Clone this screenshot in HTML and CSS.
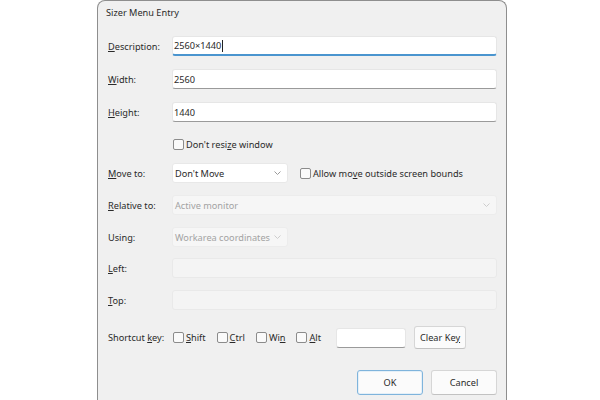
FILE: index.html
```html
<!DOCTYPE html>
<html lang="en">
<head>
    <meta charset="UTF-8">
    <title>Sizer Menu Entry</title>
    <link rel="stylesheet" href="styles.css">
</head>
<body>

<div class="dialog">
    <div class="title">Sizer Menu Entry</div>

    <div class="form">
        <div class="row r-desc">
            <label class="label"><u>D</u>escription:</label>
            <div class="field focused">2560×1440<span class="caret"></span></div>
        </div>
        <div class="row r-text">
            <label class="label"><u>W</u>idth:</label>
            <div class="field">2560</div>
        </div>
        <div class="row r-text">
            <label class="label"><u>H</u>eight:</label>
            <div class="field">1440</div>
        </div>

        <div class="row r-check">
            <span class="label"></span>
            <label class="check"><span class="box"></span>Don't resi<u>z</u>e window</label>
        </div>

        <div class="row r-move">
            <label class="label"><u>M</u>ove to:</label>
            <div class="select short">
                <span>Don't Move</span>
                <svg class="chev" width="7" height="4" viewBox="0 0 7 4"><path d="M0.5 0.5 L3.5 3.5 L6.5 0.5" fill="none" stroke="#9a9a9a" stroke-width="1"/></svg>
            </div>
            <label class="check outside"><span class="box"></span>Allow mo<u>v</u>e outside screen bounds</label>
        </div>

        <div class="row r-sel">
            <label class="label"><u>R</u>elative to:</label>
            <div class="select disabled">
                <span>Active monitor</span>
                <svg class="chev" width="7" height="4" viewBox="0 0 7 4"><path d="M0.5 0.5 L3.5 3.5 L6.5 0.5" fill="none" stroke="#cdcdcd" stroke-width="1"/></svg>
            </div>
        </div>

        <div class="row r-sel">
            <label class="label">Using:</label>
            <div class="select short disabled">
                <span>Workarea coordinates</span>
                <svg class="chev" width="7" height="4" viewBox="0 0 7 4"><path d="M0.5 0.5 L3.5 3.5 L6.5 0.5" fill="none" stroke="#cdcdcd" stroke-width="1"/></svg>
            </div>
        </div>

        <div class="row r-left">
            <label class="label"><u>L</u>eft:</label>
            <div class="field disabled"></div>
        </div>
        <div class="row r-sel">
            <label class="label"><u>T</u>op:</label>
            <div class="field disabled"></div>
        </div>

        <div class="row r-key">
            <label class="label">Shortcut <u>k</u>ey:</label>
            <label class="check mod"><span class="box"></span><u>S</u>hift</label>
            <label class="check mod"><span class="box"></span><u>C</u>trl</label>
            <label class="check mod"><span class="box"></span>Wi<u>n</u></label>
            <label class="check mod"><span class="box"></span><u>A</u>lt</label>
            <div class="field keybox"></div>
            <button class="btn clear">Clear Ke<u>y</u></button>
        </div>

        <div class="row r-buttons">
            <button class="btn ok">OK</button>
            <button class="btn">Cancel</button>
        </div>
    </div>
</div>

</body>
</html>
```

FILE: styles.css
```css
body {
    margin: 0;
    background: #fff;
    font-family: "Noto Sans", "Open Sans", sans-serif;
    font-size: 9.2px;
    color: #2a2a2a;
}
u {
    text-decoration: underline;
    text-underline-offset: 1px;
}
.dialog {
    margin-left: 97px;
    width: 408px;
    height: 399px;
    border: 1px solid #8e8e8e;
    border-bottom: none;
    border-radius: 8px 8px 0 0;
    background: #f0f0f0;
}
.title {
    height: 23px;
    line-height: 23px;
    padding-left: 8px;
}
.form {
    padding: 12px 9px 0 10px;
}
.row {
    display: flex;
    align-items: center;
    min-height: 20px;
    white-space: nowrap;
}
.label {
    width: 64px;
    flex: none;
}
.r-text { margin-top: 13px; }
.r-check { margin-top: 12px; }
.r-move { margin-top: 9px; }
.r-sel { margin-top: 12px; }
.r-left { margin-top: 11px; }
.r-key { margin-top: 16px; }
.r-buttons {
    margin-top: 21px;
    justify-content: flex-end;
    gap: 8px;
}

.field {
    flex: 1;
    height: 20px;
    box-sizing: border-box;
    background: #fff;
    border: 1px solid #e6e6e6;
    border-bottom-color: #9a9a9a;
    border-radius: 3px;
    padding: 0 1px;
    display: flex;
    align-items: center;
}
.field.focused {
    border-bottom: 2px solid #4a95cf;
}
.field.disabled {
    background: #f4f4f4;
    border-color: #e9e9e9;
}
.caret {
    display: inline-block;
    width: 1px;
    height: 12px;
    background: #222;
    margin-left: 1px;
}

.select {
    flex: 1;
    height: 20px;
    box-sizing: border-box;
    background: #fff;
    border: 1px solid #e8e8e8;
    border-radius: 3px;
    padding: 0 6px 0 2px;
    display: flex;
    align-items: center;
    justify-content: space-between;
}
.select.short {
    flex: none;
    width: 116px;
}
.select.disabled {
    background: #f6f6f6;
    border-color: #ececec;
    color: #a3a3a3;
}

.check {
    display: flex;
    align-items: center;
    margin-left: 1px;
}
.box {
    width: 11px;
    height: 11px;
    box-sizing: border-box;
    border: 1px solid #8b8b8b;
    border-radius: 2px;
    background: #fafafa;
    margin-right: 2px;
}
.check.outside {
    margin-left: 12px;
}
.check.mod {
    margin-right: 10px;
}
.keybox {
    flex: none;
    width: 70px;
    margin-left: 5px;
}

.btn {
    font: inherit;
    color: #2a2a2a;
    background: #fbfbfb;
    border: 1px solid #d6d6d6;
    border-bottom-color: #c2c2c2;
    border-radius: 3px;
    padding: 0;
    height: 25px;
    width: 66px;
}
.btn.clear {
    width: 52px;
    height: 23px;
    margin-left: 8px;
}
.btn.ok {
    border: 1px solid #7fb4dc;
    box-shadow: inset 0 0 0 1px #e5f0f8;
}
```
